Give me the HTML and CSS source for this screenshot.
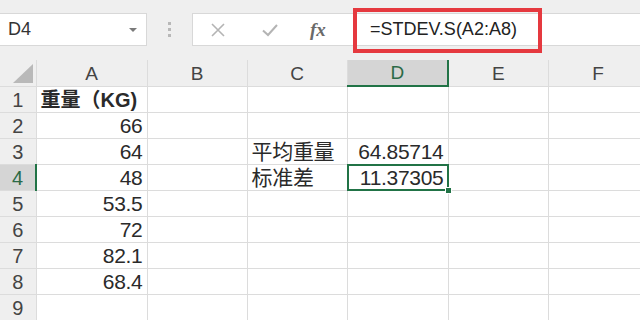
FILE: index.html
```html
<!DOCTYPE html>
<html lang="zh-CN">
<head>
  <meta charset="UTF-8" />
  <meta name="viewport" content="width=device-width, initial-scale=1.0" />
  <title>STDEV.S</title>
  <link rel="stylesheet" href="styles.css">
</head>
<body>
  <div class="toolbar">
    <div class="namebox">
      <span>D4</span>
      <span class="caret"></span>
    </div>
    <div class="grip"><i></i><i></i><i></i></div>
    <div class="formula">
      <div class="fbtns">
        <svg width="16" height="16" viewBox="0 0 16 16"><path d="M2 2 L14 14 M14 2 L2 14" stroke="#b4b4b4" stroke-width="1.6" fill="none"/></svg>
        <svg width="18" height="16" viewBox="0 0 18 16"><path d="M2 8.5 L7 13 L16 3" stroke="#b4b4b4" stroke-width="2" fill="none"/></svg>
        <span class="fx">fx</span>
      </div>
      <div class="finput">
        <span class="ftext">=STDEV.S(A2:A8)</span>
        <span class="mark"></span>
      </div>
    </div>
  </div>

  <table class="sheet">
    <colgroup>
      <col class="c-rh"><col class="c-a"><col class="c-b"><col class="c-c"><col class="c-d"><col class="c-e"><col class="c-f">
    </colgroup>
    <tr class="head">
      <th class="corner"><span class="tri"></span></th>
      <th>A</th><th>B</th><th>C</th><th class="on">D</th><th>E</th><th>F</th>
    </tr>
    <tr><th>1</th><td class="bold">重量（KG)</td><td></td><td></td><td></td><td></td><td></td></tr>
    <tr><th>2</th><td class="num">66</td><td></td><td></td><td></td><td></td><td></td></tr>
    <tr><th>3</th><td class="num">64</td><td></td><td>平均重量</td><td class="num">64.85714</td><td></td><td></td></tr>
    <tr><th class="on">4</th><td class="num">48</td><td></td><td>标准差</td><td class="num sel">11.37305</td><td></td><td></td></tr>
    <tr><th>5</th><td class="num">53.5</td><td></td><td></td><td></td><td></td><td></td></tr>
    <tr><th>6</th><td class="num">72</td><td></td><td></td><td></td><td></td><td></td></tr>
    <tr><th>7</th><td class="num">82.1</td><td></td><td></td><td></td><td></td><td></td></tr>
    <tr><th>8</th><td class="num">68.4</td><td></td><td></td><td></td><td></td><td></td></tr>
    <tr><th>9</th><td></td><td></td><td></td><td></td><td></td><td></td></tr>
  </table>
</body>
</html>
```

FILE: styles.css
```css
body {
  margin: 0;
  width: 640px;
  height: 320px;
  overflow: hidden;
  background: #ffffff;
  font-family: 'Liberation Sans', 'Noto Sans CJK SC', sans-serif;
  color: #262626;
}

/* 名称框 + 编辑栏 */
.toolbar {
  display: flex;
  align-items: flex-start;
  height: 60px;
  padding-top: 13px;
  box-sizing: border-box;
  background: #efefef;
}
.namebox {
  display: flex;
  align-items: center;
  justify-content: space-between;
  width: 147px;
  height: 33px;
  box-sizing: border-box;
  padding: 0 9px 0 8px;
  background: #fff;
  border: 1px solid #d8d8d8;
  border-left: none;
  font-size: 18px;
  color: #333;
}
.caret {
  width: 0;
  height: 0;
  border-left: 4px solid transparent;
  border-right: 4px solid transparent;
  border-top: 4px solid #7a7a7a;
}
.grip {
  width: 45px;
  height: 33px;
  display: flex;
  flex-direction: column;
  align-items: center;
  justify-content: center;
  gap: 3px;
}
.grip i {
  width: 3px;
  height: 3px;
  background: #b8b8b8;
}
.formula {
  flex: 1;
  display: flex;
  height: 33px;
  box-sizing: border-box;
  background: #fff;
  border: 1px solid #d8d8d8;
  border-right: none;
}
.fbtns {
  width: 152px;
  display: flex;
  align-items: center;
  padding-left: 17px;
  gap: 35px;
  box-sizing: border-box;
}
.fx {
  margin-left: -4px;
  font-family: 'Liberation Serif', serif;
  font-style: italic;
  font-weight: bold;
  font-size: 19px;
  color: #6a6a6a;
}
.finput {
  flex: 1;
  position: relative;
  display: flex;
  align-items: center;
  padding-left: 25px;
}
.ftext {
  font-size: 18px;
  color: #222;
}
.mark {
  position: absolute;
  left: 8px;
  top: -6px;
  width: 189px;
  height: 45px;
  box-sizing: border-box;
  border: 4px solid #e5393f;
}

/* 工作表 */
.sheet {
  border-collapse: collapse;
  table-layout: fixed;
  width: 648px;
  font-size: 21px;
}
.c-rh { width: 36px; }
.c-a { width: 111px; }
.c-b, .c-c, .c-e, .c-f { width: 100px; }
.c-d { width: 101px; }
.sheet th,
.sheet td {
  height: 25px;
  padding: 0 4px 0 4px;
  border: 1px solid #dcdcdc;
  vertical-align: bottom;
  white-space: nowrap;
  overflow: hidden;
  line-height: 24px;
}
.sheet td {
  color: #2a2a2a;
  letter-spacing: -0.3px;
}
.sheet th {
  font-weight: normal;
  font-size: 20px;
  background: #efefef;
  color: #444;
  text-align: center;
}
.sheet tr.head th {
  height: 25px;
  font-size: 19px;
  border-top: none;
  color: #444;
}
.sheet th.corner {
  position: relative;
  border-left: none;
}
.tri {
  position: absolute;
  right: 3px;
  bottom: 3px;
  width: 0;
  height: 0;
  border-left: 20px solid transparent;
  border-bottom: 19px solid #b9b9b9;
}
.sheet tr.head th.on {
  background: #d5d5d5;
  color: #2c6a47;
  border-bottom: 2px solid #217346;
}
.sheet th.on {
  background: #d5d5d5;
  color: #2c6a47;
  border-right: 2px solid #217346;
}
.sheet tr th:first-child {
  border-left: none;
}
.num {
  text-align: right;
}
.sheet td.bold {
  font-weight: bold;
  font-size: 20px;
  letter-spacing: 0;
}
.sel {
  position: relative;
  overflow: visible !important;
}
.sel::before {
  content: '';
  position: absolute;
  left: -1px;
  top: -1px;
  right: -1px;
  bottom: -1px;
  border: 2px solid #217346;
}
.sel::after {
  content: '';
  position: absolute;
  right: -4px;
  bottom: -4px;
  width: 5px;
  height: 5px;
  background: #217346;
  border: 1px solid #fff;
}
```
